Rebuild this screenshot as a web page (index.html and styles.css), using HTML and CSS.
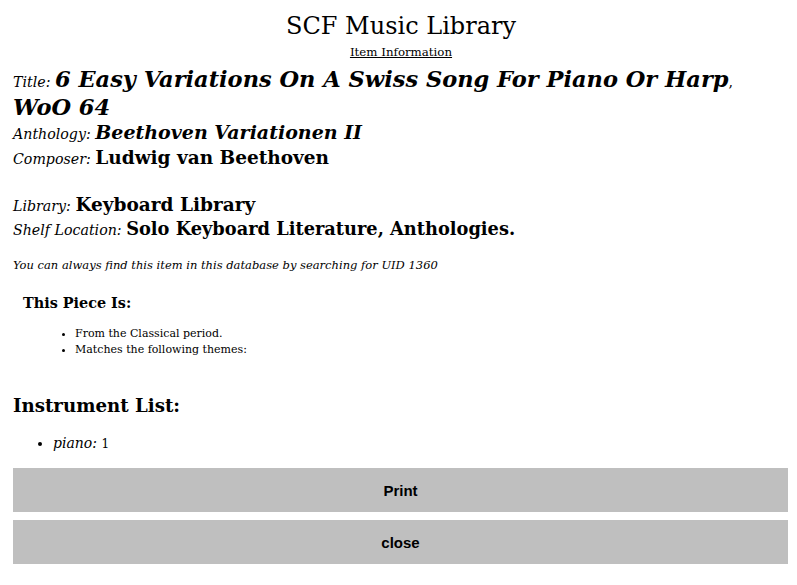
FILE: index.html
```html
<!DOCTYPE html>
<html lang="en">

<head>
  <meta charset="UTF-8" />
  <title>SCF Music Library</title>
  <link rel="stylesheet" href="styles.css">
</head>

<body>
  <h1>SCF Music Library</h1>
  <div class="subtitle"><a href="#">Item Information</a></div>

  <div class="field title-field"><span class="label">Title:</span> <span class="value title-value">6 Easy Variations On A Swiss Song For Piano Or Harp</span>, <span class="value title-value">WoO 64</span></div>
  <div class="field anthology-field"><span class="label">Anthology:</span> <span class="value anthology">Beethoven Variationen II</span></div>
  <div class="field composer-field"><span class="label">Composer:</span> <span class="value">Ludwig van Beethoven</span></div>

  <div class="group">
    <div class="field library-field"><span class="label">Library:</span> <span class="value">Keyboard Library</span></div>
    <div class="field shelf-field"><span class="label">Shelf Location:</span> <span class="value shelf">Solo Keyboard Literature, Anthologies.</span></div>
  </div>

  <p class="uid">You can always find this item in this database by searching for UID 1360</p>

  <div class="piece">
    <h3>This Piece Is:</h3>
    <ul>
      <li>From the Classical period.</li>
      <li>Matches the following themes:</li>
    </ul>
  </div>

  <h2>Instrument List:</h2>
  <ul class="instruments">
    <li><em>piano:</em> <span class="count">1</span></li>
  </ul>

  <button class="action">Print</button>
  <button class="action">close</button>
</body>

</html>
```

FILE: styles.css
```css
body {
  font-family: "DejaVu Serif", Georgia, serif;
  margin: 0;
  padding: 9px 8px 0 13px;
  color: #000;
  background: #fff;
}

h1 {
  text-align: center;
  font-size: 24px;
  font-weight: normal;
  margin: 0;
  line-height: 34px;
}

.subtitle {
  text-align: center;
  font-size: 11.8px;
  line-height: 14px;
  padding-top: 2px;
}

.subtitle a {
  color: #000;
}

/* label + value rows; values don't stretch the line box */
.field {
  font-size: 14.2px;
  line-height: 26px;
}

.label {
  font-style: italic;
}

.value {
  font-weight: bold;
  font-size: 18.5px;
  line-height: 0;
}

.title-field {
  margin-top: 9px;
  line-height: 28px;
}

.title-value {
  font-style: italic;
  font-size: 22.5px;
}

.anthology-field {
  line-height: 20px;
}

.anthology {
  font-style: italic;
  font-size: 19px;
}

.composer-field {
  line-height: 30px;
}

.group {
  margin-top: 20px;
}

.library-field {
  line-height: 25px;
}

.shelf-field {
  line-height: 23px;
}

.shelf {
  font-size: 17.8px;
}

.uid {
  font-style: italic;
  font-size: 11.5px;
  line-height: 18px;
  margin: 14px 0 0;
}

.piece {
  padding-left: 10px;
  margin-top: 20px;
}

.piece h3 {
  font-size: 14.4px;
  line-height: 18px;
  margin: 0 0 14px;
}

.piece ul {
  font-size: 11px;
  line-height: 16px;
  margin: 0;
  padding-left: 52px;
}

h2 {
  font-size: 18.2px;
  line-height: 24px;
  margin: 36px 0 15px;
}

.instruments {
  font-size: 14px;
  line-height: 20px;
  margin: 0 0 14px;
  padding-left: 40px;
}

.count {
  font-size: 12px;
}

.action {
  display: block;
  width: 775px;
  height: 44px;
  margin: 0 0 8px;
  padding: 0;
  border: none;
  background-color: #bfbfbf;
  font-family: "Liberation Sans", Arial, sans-serif;
  font-weight: bold;
  font-size: 15px;
  color: #000;
}
```
